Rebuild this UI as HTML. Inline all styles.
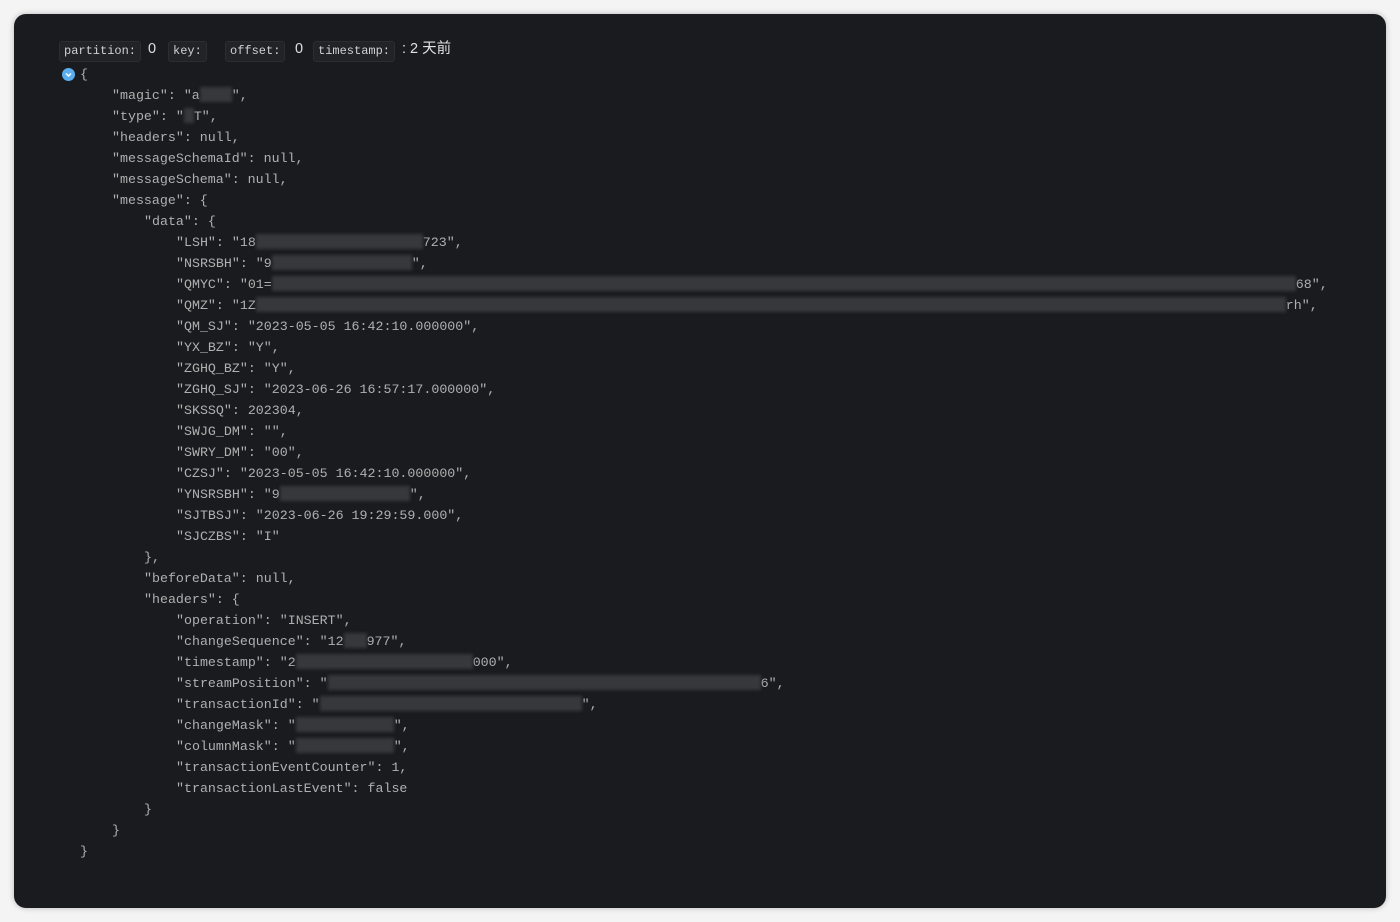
<!DOCTYPE html>
<html><head><meta charset="utf-8"><style>
body{margin:0;background:#f4f4f4;width:1400px;height:922px;overflow:hidden}
.p{position:absolute;left:14px;top:14px;width:1372px;height:894px;background:#1a1b1e;border-radius:12px;box-shadow:0 0 6px rgba(0,0,0,.25)}
.l{position:absolute;font-family:"Liberation Mono",monospace;font-size:13.3px;color:#b0b0b0;white-space:pre;line-height:21px}
.b{display:inline-block;height:15px;background:#37383b;vertical-align:-3px;filter:blur(1.5px)}
.t{position:absolute;top:41px;height:19px;background:#222326;border:1px solid #2c2d30;border-radius:3px;font-family:"Liberation Mono",monospace;font-size:12px;color:#d0d0d0;line-height:19px;padding:0 4px}
.v{position:absolute;top:40px;font-family:"Liberation Sans","Noto Sans CJK SC",sans-serif;font-size:14.5px;color:#e0e0e0;line-height:19px}
</style></head><body>
<div class="p"></div>
<div class="t" style="left:59px">partition:</div><div class="v" style="left:148px">0</div>
<div class="t" style="left:168px">key:</div>
<div class="t" style="left:225px">offset:</div><div class="v" style="left:295px">0</div>
<div class="t" style="left:313px">timestamp:</div><div class="v" style="left:402px">: 2 天前</div>
<div style="position:absolute;left:62px;top:68px;width:13px;height:13px;border-radius:50%;background:#5aaef0"><svg width="13" height="13" viewBox="0 0 13 13"><path d="M4 5.5l2.5 2.5 2.5-2.5" stroke="#fff" stroke-width="1.5" fill="none"/></svg></div>
<div class="l" style="left:80px;top:64px">{</div>
<div class="l" style="left:112px;top:85px">"magic": "a<span class="b" style="width:32px"></span>",</div>
<div class="l" style="left:112px;top:106px">"type": "<span class="b" style="width:10px"></span>T",</div>
<div class="l" style="left:112px;top:127px">"headers": null,</div>
<div class="l" style="left:112px;top:148px">"messageSchemaId": null,</div>
<div class="l" style="left:112px;top:169px">"messageSchema": null,</div>
<div class="l" style="left:112px;top:190px">"message": {</div>
<div class="l" style="left:144px;top:211px">"data": {</div>
<div class="l" style="left:176px;top:232px">"LSH": "18<span class="b" style="width:167px"></span>723",</div>
<div class="l" style="left:176px;top:253px">"NSRSBH": "9<span class="b" style="width:140px"></span>",</div>
<div class="l" style="left:176px;top:274px">"QMYC": "01=<span class="b" style="width:1024px"></span>68",</div>
<div class="l" style="left:176px;top:295px">"QMZ": "1Z<span class="b" style="width:1030px"></span>rh",</div>
<div class="l" style="left:176px;top:316px">"QM_SJ": "2023-05-05 16:42:10.000000",</div>
<div class="l" style="left:176px;top:337px">"YX_BZ": "Y",</div>
<div class="l" style="left:176px;top:358px">"ZGHQ_BZ": "Y",</div>
<div class="l" style="left:176px;top:379px">"ZGHQ_SJ": "2023-06-26 16:57:17.000000",</div>
<div class="l" style="left:176px;top:400px">"SKSSQ": 202304,</div>
<div class="l" style="left:176px;top:421px">"SWJG_DM": "",</div>
<div class="l" style="left:176px;top:442px">"SWRY_DM": "00",</div>
<div class="l" style="left:176px;top:463px">"CZSJ": "2023-05-05 16:42:10.000000",</div>
<div class="l" style="left:176px;top:484px">"YNSRSBH": "9<span class="b" style="width:130px"></span>",</div>
<div class="l" style="left:176px;top:505px">"SJTBSJ": "2023-06-26 19:29:59.000",</div>
<div class="l" style="left:176px;top:526px">"SJCZBS": "I"</div>
<div class="l" style="left:144px;top:547px">},</div>
<div class="l" style="left:144px;top:568px">"beforeData": null,</div>
<div class="l" style="left:144px;top:589px">"headers": {</div>
<div class="l" style="left:176px;top:610px">"operation": "INSERT",</div>
<div class="l" style="left:176px;top:631px">"changeSequence": "12<span class="b" style="width:23px"></span>977",</div>
<div class="l" style="left:176px;top:652px">"timestamp": "2<span class="b" style="width:177px"></span>000",</div>
<div class="l" style="left:176px;top:673px">"streamPosition": "<span class="b" style="width:433px"></span>6",</div>
<div class="l" style="left:176px;top:694px">"transactionId": "<span class="b" style="width:262px"></span>",</div>
<div class="l" style="left:176px;top:715px">"changeMask": "<span class="b" style="width:98px"></span>",</div>
<div class="l" style="left:176px;top:736px">"columnMask": "<span class="b" style="width:98px"></span>",</div>
<div class="l" style="left:176px;top:757px">"transactionEventCounter": 1,</div>
<div class="l" style="left:176px;top:778px">"transactionLastEvent": false</div>
<div class="l" style="left:144px;top:799px">}</div>
<div class="l" style="left:112px;top:820px">}</div>
<div class="l" style="left:80px;top:841px">}</div>
</body></html>
